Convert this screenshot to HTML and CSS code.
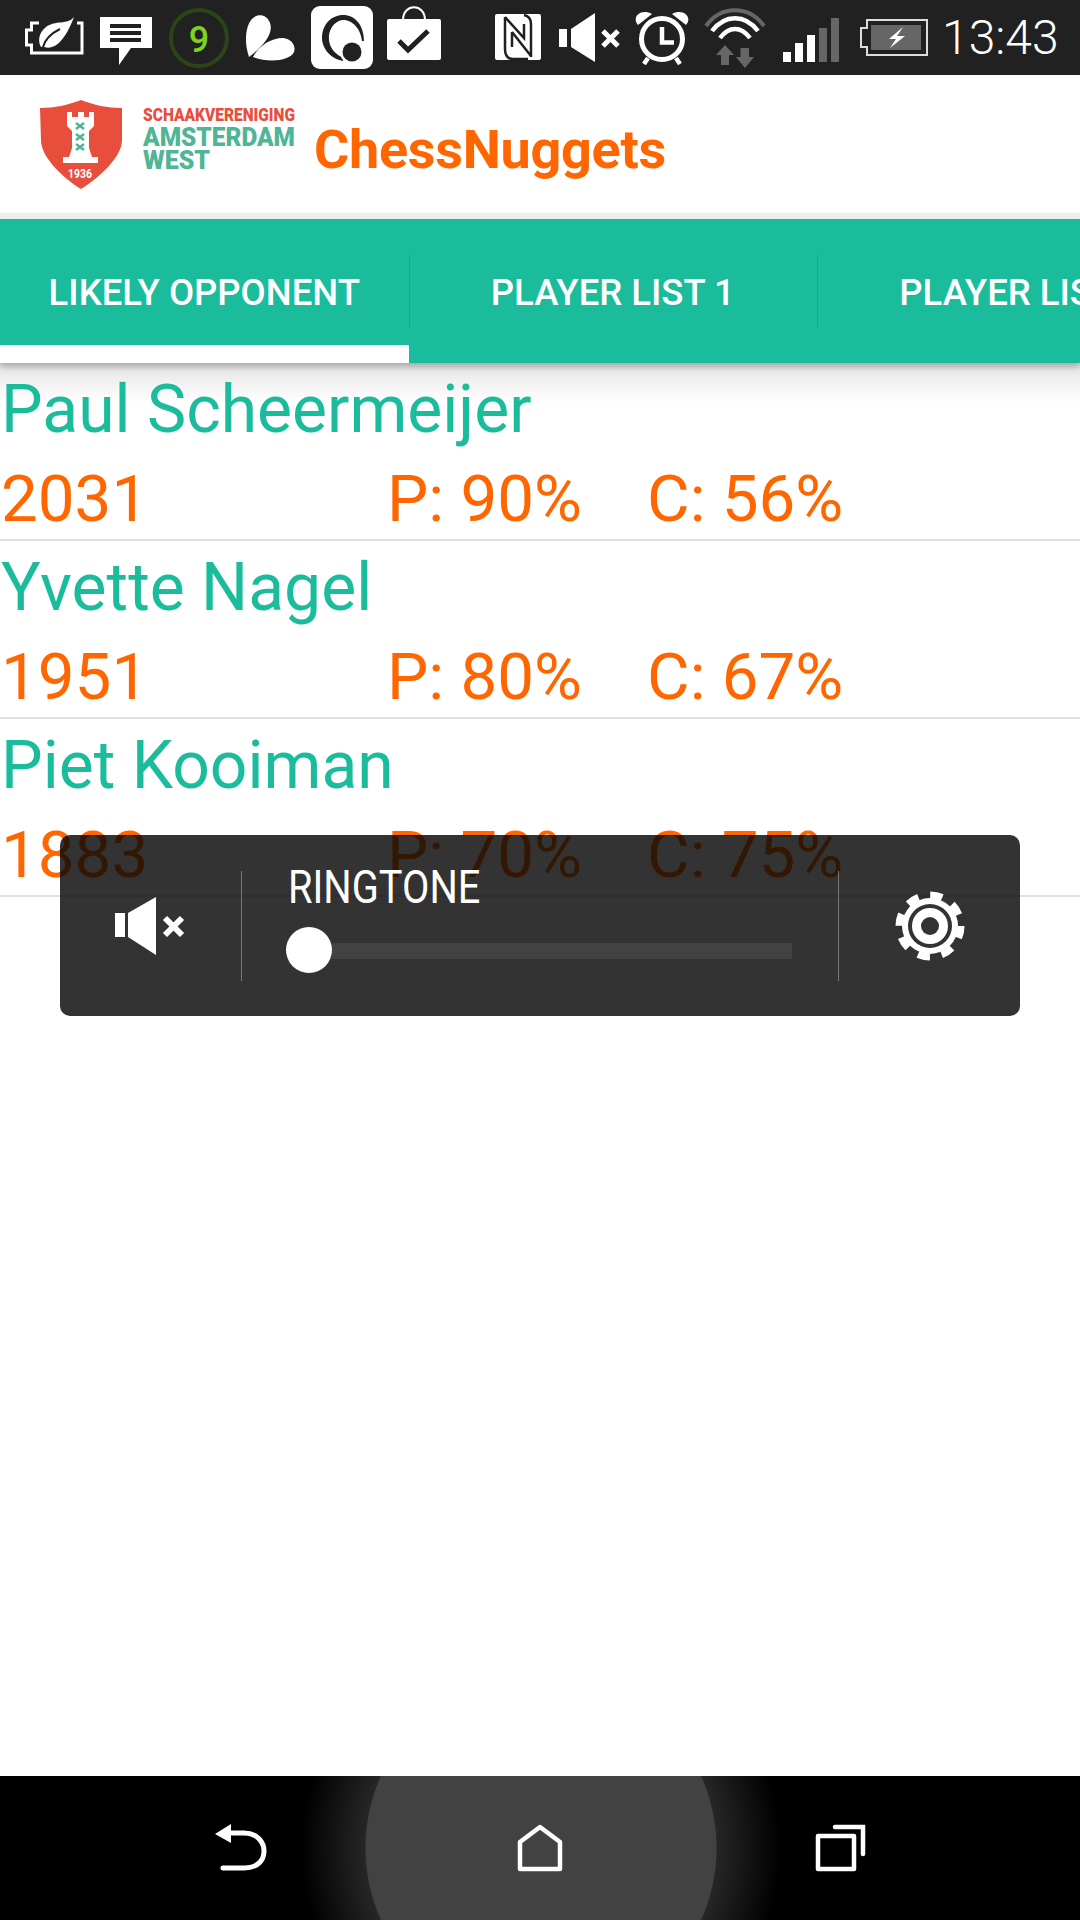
FILE: index.html
```html
<!DOCTYPE html>
<html lang="en">
<head>
	<meta charset="UTF-8">
	<title>ChessNuggets</title>
	<link rel="stylesheet" href="styles.css">
</head>
<body>
	<div class="screen">
		<div class="statusbar">
			<svg class="si" width="61" height="75" viewBox="25 0 61 75">
				<path d="M39 23H31.5V30H26.5V45H31.5V53H82V23H77" fill="none" stroke="#fff" stroke-width="3"/>
				<path d="M74 17C68 25 55 20 46 27C38 33 38 42 41 47C45 46 46 49 52 47C62 44 69 30 74 17Z" fill="#fff"/>
				<path d="M43 47C45 39 50 34 60 29" fill="none" stroke="#212121" stroke-width="2"/>
			</svg>
			<svg class="si" width="55" height="75" viewBox="100 0 55 75">
				<path d="M100 17H152V48H131L119 65V48H100Z" fill="#fff"/>
				<path d="M110 26H141M110 33H141M110 40H141" stroke="#212121" stroke-width="4"/>
			</svg>
			<svg class="si" width="60" height="75" viewBox="169 0 60 75">
				<circle cx="199" cy="38" r="28" fill="none" stroke="#2b4518" stroke-width="4"/>
				<text class="unread" x="199" y="52" text-anchor="middle">9</text>
			</svg>
			<svg class="si" width="54" height="75" viewBox="243 0 54 75">
				<path d="M249 57C244 43 245 25 253 18C259 13 267 15 270 23C274 34 262 47 249 57Z" fill="#fff"/>
				<path d="M253 57C258 47 270 38 283 38C292 39 296 46 294 52C290 61 268 63 253 57Z" fill="#fff"/>
			</svg>
			<svg class="si" width="62" height="75" viewBox="311 0 62 75">
				<rect x="311" y="6" width="62" height="63" rx="9" fill="#fff"/>
				<path d="M343 61C328 58 322 46 322 38C322 24 332 15 343 15C355 15 364 25 364 41L362 41C361 29 352 19 342 20C333 22 328 31 329 40C330 49 336 55 344 58Z" fill="#212121"/>
				<circle cx="352" cy="52" r="12" fill="#fff"/>
				<circle cx="352" cy="52" r="9.5" fill="#212121"/>
			</svg>
			<svg class="si" width="94" height="75" viewBox="387 0 94 75">
				<path d="M403 20C403 3 425 3 425 20" fill="none" stroke="#fff" stroke-width="2"/>
				<rect x="387" y="19" width="54" height="41" rx="2" fill="#fff"/>
				<path d="M399 41L408 50L428 31" fill="none" stroke="#212121" stroke-width="5"/>
			</svg>
			<svg class="si" width="50" height="75" viewBox="495 0 50 75">
				<rect x="495" y="14" width="46" height="46" rx="2" fill="#fff"/>
				<path d="M505 17V49C505 56 508 59 513 59H528M505 17L524 38V24M524 15C529 16 531 19 531 24V57M512 32L531 56M512 32V47" fill="none" stroke="#212121" stroke-width="2.5"/>
			</svg>
			<svg class="si" width="61" height="75" viewBox="558 0 61 75">
				<path d="M558 29H566V47H558ZM570 29L594 13V62L570 47Z" fill="#fff"/>
				<path d="M602 31L617 46M617 31L602 46" stroke="#fff" stroke-width="5"/>
			</svg>
			<svg class="si" width="56" height="75" viewBox="633 0 56 75">
				<circle cx="661" cy="39" r="20.5" fill="none" stroke="#fff" stroke-width="5"/>
				<path d="M661 27V42.5H673" fill="none" stroke="#fff" stroke-width="4.5"/>
				<path d="M637 25C630 17 640 8 651 14ZM685 25C692 17 682 8 671 14Z" fill="#fff"/>
				<path d="M647 58L643 64M675 58L679 64" stroke="#fff" stroke-width="4.5"/>
			</svg>
			<svg class="si" width="65" height="75" viewBox="703 0 65 75">
				<path d="M705 26C720 5 748 5 763 26" fill="none" stroke="#666" stroke-width="4"/>
				<path d="M711 31C724 14 744 14 757 31M719 38C728 26 740 26 749 38" fill="none" stroke="#fff" stroke-width="4.5"/>
				<path d="M724 45L733 55H728V65H720V55H715ZM744 68L735 57H739.5V48H748V57H753Z" fill="#666"/>
			</svg>
			<svg class="si" width="63" height="75" viewBox="783 0 63 75">
				<path d="M783 52H791V62H783ZM795 43H803V62H795ZM807 35H815V62H807Z" fill="#fff"/>
				<path d="M819 28H827V62H819ZM831 18H839V62H831Z" fill="#666"/>
			</svg>
			<svg class="si" width="72" height="75" viewBox="861 0 72 75">
				<path d="M868 20H928V55H868V47H862V28H868Z" fill="none" stroke="#ddd" stroke-width="2"/>
				<rect x="872" y="25" width="50" height="25" fill="#666"/>
				<path d="M904 27L890 39H897L891 48L906 36H898Z" fill="#fff"/>
			</svg>
			<span class="clock">13:43</span>
		</div>

		<header class="appbar">
			<svg class="logo" width="260" height="92" viewBox="37 99 260 92">
				<path d="M40 108C55 108 68 105 81 100C94 105 107 108 122 108V140C122 157 100 177 81 189C62 177 41 157 41 140Z" fill="#e84e3c"/>
				<path d="M67 112H72V117H78V112H84V117H89V112H94V126L89 131V148L92 157H98V163H63V157H69L72 148V131L67 126Z" fill="#fff"/>
				<path d="M76 123L84 129M84 123L76 129M76 134L84 140M84 134L76 140M76 144L84 150M84 144L76 150" stroke="#4fb594" stroke-width="2.5"/>
				<text class="logo-year" x="80" y="178" text-anchor="middle" textLength="24" lengthAdjust="spacingAndGlyphs">1936</text>
				<text class="logo-small" x="143" y="121" textLength="152" lengthAdjust="spacingAndGlyphs">SCHAAKVERENIGING</text>
				<text class="logo-big" x="143" y="146" textLength="152" lengthAdjust="spacingAndGlyphs">AMSTERDAM</text>
				<text class="logo-big" x="143" y="169" textLength="67" lengthAdjust="spacingAndGlyphs">WEST</text>
			</svg>
			<h1 class="app-title">ChessNuggets</h1>
		</header>

		<nav class="tabs">
			<div class="tab active"><span>LIKELY OPPONENT</span></div>
			<div class="tab"><span>PLAYER LIST 1</span></div>
			<div class="tab"><span>PLAYER LIST 2</span></div>
		</nav>

		<main class="players">
			<div class="player">
				<div class="player-name">Paul Scheermeijer</div>
				<div class="player-stats"><span>2031</span><span>P: 90%</span><span>C: 56%</span></div>
			</div>
			<div class="player">
				<div class="player-name">Yvette Nagel</div>
				<div class="player-stats"><span>1951</span><span>P: 80%</span><span>C: 67%</span></div>
			</div>
			<div class="player">
				<div class="player-name">Piet Kooiman</div>
				<div class="player-stats"><span>1883</span><span>P: 70%</span><span>C: 75%</span></div>
			</div>
		</main>

		<div class="volume">
			<div class="volume-icon">
				<svg width="72" height="64" viewBox="115 893 72 64">
					<path d="M115 912H125V936H115ZM128 912L156 896V954L128 936Z" fill="#fff"/>
					<path d="M165 917L182 934M182 917L165 934" stroke="#fff" stroke-width="6"/>
				</svg>
			</div>
			<div class="volume-main">
				<div class="volume-label">RINGTONE</div>
				<div class="slider"><span class="slider-thumb"></span><span class="slider-track"></span></div>
			</div>
			<div class="volume-icon">
				<svg width="72" height="72" viewBox="-36 -36 72 72">
					<circle r="31" fill="none" stroke="#fff" stroke-width="7" stroke-dasharray="12.3 12.05"/>
					<circle r="28" fill="#fff"/>
					<circle r="22" fill="#333"/>
					<circle r="18" fill="#fff"/>
					<circle r="9" fill="#333"/>
				</svg>
			</div>
		</div>

		<footer class="navbar">
			<svg width="60" height="60" viewBox="210 1818 60 60">
				<path d="M215 1834L231 1824V1843Z" fill="#fff"/>
				<path d="M229 1833H244C258 1833 264 1843 264 1851C264 1860 258 1868 244 1868H223" fill="none" stroke="#fff" stroke-width="5" stroke-linecap="round"/>
			</svg>
			<svg width="60" height="60" viewBox="510 1818 60 60">
				<path d="M520 1842L540 1827L560 1842V1869H520Z" fill="none" stroke="#fff" stroke-width="4.5" stroke-linejoin="round"/>
			</svg>
			<svg width="60" height="60" viewBox="810 1818 60 60">
				<rect x="818" y="1836" width="36" height="33" fill="none" stroke="#fff" stroke-width="4.5" stroke-linejoin="round"/>
				<path d="M835 1827H863V1854" fill="none" stroke="#fff" stroke-width="4.5" stroke-linecap="round"/>
			</svg>
		</footer>
	</div>
</body>
</html>
```

FILE: styles.css
```css
* {
	box-sizing: border-box;
}
html, body {
	margin: 0;
	padding: 0;
	background: white;
}
body {
	font-family: Roboto, sans-serif;
}

.screen {
	position: relative;
	width: 1080px;
	height: 1920px;
	overflow: hidden;
	display: flex;
	flex-direction: column;
}

/* status bar */
.statusbar {
	height: 75px;
	flex: none;
	background: #212121;
	display: flex;
	align-items: center;
	gap: 14px;
	padding-left: 25px;
}
.si {
	flex: none;
	display: block;
}
.unread {
	font: 500 36px Roboto, sans-serif;
	fill: #7ed321;
}
.clock {
	color: white;
	font-weight: 300;
	font-size: 48px;
	line-height: 76px;
	margin-left: -4px;
}

/* app bar */
.appbar {
	height: 138px;
	flex: none;
	display: flex;
	align-items: flex-start;
	padding: 24px 0 0 37px;
	gap: 17px;
}
.logo {
	flex: none;
	display: block;
}
.logo-year {
	font: 700 12px Roboto, sans-serif;
	fill: white;
}
.logo-small {
	font: 900 18px Roboto, sans-serif;
	fill: #e84e3c;
}
.logo-big {
	font: 900 26px Roboto, sans-serif;
	fill: #4fb594;
}
.app-title {
	margin: 0;
	color: #ff6600;
	font-size: 54px;
	font-weight: 700;
	letter-spacing: -0.3px;
	line-height: 102px;
}

/* tabs */
.tabs {
	height: 150px;
	flex: none;
	display: flex;
	background: linear-gradient(#eee 6px, #1abc9c 6px);
	box-shadow: 0 4px 6px rgb(0 0 0 / 0.25);
	position: relative;
	padding-top: 6px;
}
.tab {
	flex: none;
	width: 408.5px;
	display: flex;
	align-items: center;
	justify-content: center;
	color: white;
	font-size: 36.5px;
	font-weight: 500;
	position: relative;
	padding-top: 2px;
}
.tab.active {
	box-shadow: inset 0 -18px white;
}
.tab + .tab::before {
	content: "";
	position: absolute;
	left: 0;
	top: 36px;
	height: 72px;
	width: 1px;
	background: #17a78b;
}

/* player rows */
.players {
	flex: 1;
	background: linear-gradient(#e4e4e4, white 40px);
}
.player {
	height: 178px;
	border-bottom: 2px solid #e0e0e0;
	padding: 3px 0 0 1px;
	font-size: 66px;
}
.player-name {
	color: #1abc9c;
	height: 88px;
	line-height: 88px;
}
.player-stats {
	color: #ff6600;
	display: grid;
	grid-template-columns: 386px 260px 1fr;
	font-size: 65.5px;
	line-height: 88px;
	margin-top: 1px;
}

/* volume popup */
.volume {
	position: absolute;
	left: 60px;
	top: 835px;
	width: 960px;
	height: 181px;
	border-radius: 10px;
	background: rgb(6 6 6 / 0.82);
	display: flex;
	padding-top: 36px;
}
.volume-icon {
	flex: none;
	width: 181px;
	height: 110px;
	display: flex;
	align-items: center;
	justify-content: center;
}
.volume-main {
	flex: none;
	width: 598px;
	height: 110px;
	border-left: 1px solid #777;
	border-right: 1px solid #777;
	padding-left: 46px;
}
.volume-label {
	color: white;
	font-size: 46px;
	line-height: 36px;
	transform: scaleX(0.865);
	transform-origin: left;
	margin-top: -2px;
}
.slider {
	display: flex;
	align-items: center;
	margin: 22px 0 0 -2px;
}
.slider-thumb {
	flex: none;
	width: 46px;
	height: 46px;
	border-radius: 50%;
	background: white;
}
.slider-track {
	flex: none;
	width: 460px;
	height: 16px;
	margin-top: 1px;
	background: #424242;
}

/* nav bar */
.navbar {
	height: 144px;
	flex: none;
	display: grid;
	grid-template-columns: 300px 300px 300px;
	justify-content: center;
	justify-items: center;
	align-items: center;
	background: radial-gradient(circle at 541px 72px, #424242 175px, #262626 176px, #000 240px);
}
```
